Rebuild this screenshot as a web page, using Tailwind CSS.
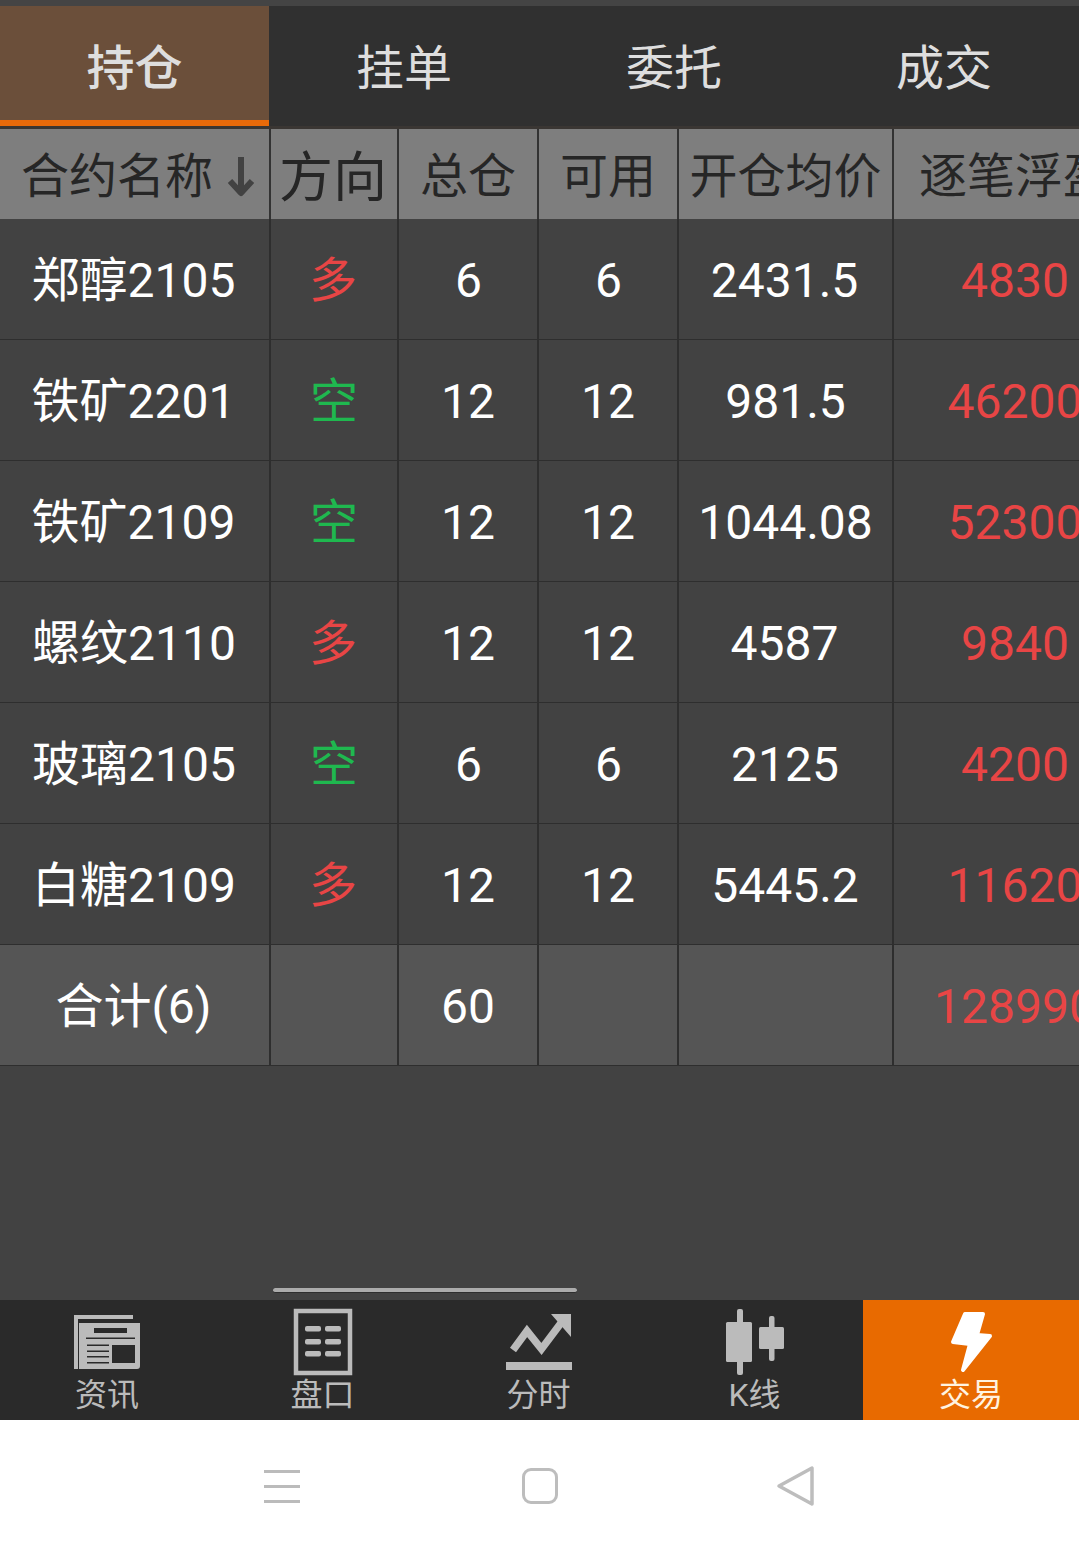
<!DOCTYPE html>
<html lang="zh-CN">
<head>
<meta charset="utf-8">
<script src="https://cdn.jsdelivr.net/npm/@tailwindcss/browser@4"></script>
</head>
<body class="m-0 bg-white">
<div class="relative w-[1079px] h-[1552px] overflow-hidden flex flex-col font-['Roboto','Noto_Sans_CJK_SC',sans-serif] text-[48px] leading-none">
  <div class="h-[6px] shrink-0 bg-[#444444]"></div>
  <div class="h-[120px] shrink-0 grid grid-cols-[269px_270px_270px_270px] bg-[#303030] text-[#dedede] text-center">
    <div class="bg-[#6b4f3a] border-b-[6px] border-[#e86a0a] flex items-center justify-center pt-[11px] font-medium">持仓</div>
    <div class="flex items-center justify-center pt-[5px]">挂单</div>
    <div class="flex items-center justify-center pt-[5px]">委托</div>
    <div class="flex items-center justify-center pt-[5px]">成交</div>
  </div>
  <div class="h-[3px] shrink-0 bg-[#3a3633]"></div>

  <div class="flex-1 bg-[#424242] overflow-hidden">
    <div class="w-[1138px] h-[90px] grid grid-cols-[271px_128px_140px_140px_215px_244px] bg-[#7e7e7e] text-[#262626] text-center *:pt-[6px]">
      <div class="border-r-2 border-[#333333] flex items-center pl-[21px] gap-[14px]">合约名称<svg class="w-[28px] h-[40px]" viewBox="0 0 28 40" fill="none" stroke="#424242" stroke-width="6" stroke-linejoin="round"><path d="M14 0V35M3 24L14 36L25 24"/></svg></div>
      <div class="border-r-2 border-[#333333] flex items-center justify-center text-[54px] pr-[2px] pt-[9px]!">方向</div>
      <div class="border-r-2 border-[#333333] flex items-center justify-center">总仓</div>
      <div class="border-r-2 border-[#333333] flex items-center justify-center">可用</div>
      <div class="border-r-2 border-[#333333] flex items-center justify-center">开仓均价</div>
      <div class="flex items-center justify-center pr-[2px]">逐笔浮盈</div>
    </div>

    <div class="w-[1138px] h-[121px] grid grid-cols-[271px_128px_140px_140px_215px_244px] border-b border-[#2e2e2e] text-white text-center *:pt-[3px]">
      <div class="border-r-2 border-[#2e2e2e] flex items-center justify-center pr-[2px]">郑醇2105</div>
      <div class="border-r-2 border-[#2e2e2e] flex items-center justify-center pr-[2px] text-[#e84545]">多</div>
      <div class="border-r-2 border-[#2e2e2e] flex items-center justify-center pl-[1px]">6</div>
      <div class="border-r-2 border-[#2e2e2e] flex items-center justify-center pl-[1px]">6</div>
      <div class="border-r-2 border-[#2e2e2e] flex items-center justify-center pr-[2px]">2431.5</div>
      <div class="flex items-center justify-center pr-[2px] text-[#e84545]">4830</div>
    </div>
    <div class="w-[1138px] h-[121px] grid grid-cols-[271px_128px_140px_140px_215px_244px] border-b border-[#2e2e2e] text-white text-center *:pt-[3px]">
      <div class="border-r-2 border-[#2e2e2e] flex items-center justify-center pr-[2px]">铁矿2201</div>
      <div class="border-r-2 border-[#2e2e2e] flex items-center justify-center text-[#1fb84f]">空</div>
      <div class="border-r-2 border-[#2e2e2e] flex items-center justify-center">12</div>
      <div class="border-r-2 border-[#2e2e2e] flex items-center justify-center">12</div>
      <div class="border-r-2 border-[#2e2e2e] flex items-center justify-center">981.5</div>
      <div class="flex items-center justify-center pr-[2px] text-[#e84545]">46200</div>
    </div>
    <div class="w-[1138px] h-[121px] grid grid-cols-[271px_128px_140px_140px_215px_244px] border-b border-[#2e2e2e] text-white text-center *:pt-[3px]">
      <div class="border-r-2 border-[#2e2e2e] flex items-center justify-center pr-[2px]">铁矿2109</div>
      <div class="border-r-2 border-[#2e2e2e] flex items-center justify-center text-[#1fb84f]">空</div>
      <div class="border-r-2 border-[#2e2e2e] flex items-center justify-center">12</div>
      <div class="border-r-2 border-[#2e2e2e] flex items-center justify-center">12</div>
      <div class="border-r-2 border-[#2e2e2e] flex items-center justify-center">1044.08</div>
      <div class="flex items-center justify-center pr-[2px] text-[#e84545]">52300</div>
    </div>
    <div class="w-[1138px] h-[121px] grid grid-cols-[271px_128px_140px_140px_215px_244px] border-b border-[#2e2e2e] text-white text-center *:pt-[3px]">
      <div class="border-r-2 border-[#2e2e2e] flex items-center justify-center pr-[1px]">螺纹2110</div>
      <div class="border-r-2 border-[#2e2e2e] flex items-center justify-center pr-[2px] text-[#e84545]">多</div>
      <div class="border-r-2 border-[#2e2e2e] flex items-center justify-center">12</div>
      <div class="border-r-2 border-[#2e2e2e] flex items-center justify-center">12</div>
      <div class="border-r-2 border-[#2e2e2e] flex items-center justify-center pr-[2px]">4587</div>
      <div class="flex items-center justify-center pr-[2px] text-[#e84545]">9840</div>
    </div>
    <div class="w-[1138px] h-[121px] grid grid-cols-[271px_128px_140px_140px_215px_244px] border-b border-[#2e2e2e] text-white text-center *:pt-[3px]">
      <div class="border-r-2 border-[#2e2e2e] flex items-center justify-center pr-[1px]">玻璃2105</div>
      <div class="border-r-2 border-[#2e2e2e] flex items-center justify-center text-[#1fb84f]">空</div>
      <div class="border-r-2 border-[#2e2e2e] flex items-center justify-center pl-[1px]">6</div>
      <div class="border-r-2 border-[#2e2e2e] flex items-center justify-center pl-[1px]">6</div>
      <div class="border-r-2 border-[#2e2e2e] flex items-center justify-center pr-[1px]">2125</div>
      <div class="flex items-center justify-center pr-[2px] text-[#e84545]">4200</div>
    </div>
    <div class="w-[1138px] h-[121px] grid grid-cols-[271px_128px_140px_140px_215px_244px] border-b border-[#2e2e2e] text-white text-center *:pt-[3px]">
      <div class="border-r-2 border-[#2e2e2e] flex items-center justify-center pr-[1px]">白糖2109</div>
      <div class="border-r-2 border-[#2e2e2e] flex items-center justify-center pr-[2px] text-[#e84545]">多</div>
      <div class="border-r-2 border-[#2e2e2e] flex items-center justify-center">12</div>
      <div class="border-r-2 border-[#2e2e2e] flex items-center justify-center">12</div>
      <div class="border-r-2 border-[#2e2e2e] flex items-center justify-center pr-[1px]">5445.2</div>
      <div class="flex items-center justify-center pr-[2px] text-[#e84545]">11620</div>
    </div>
    <div class="w-[1138px] h-[121px] grid grid-cols-[271px_128px_140px_140px_215px_244px] border-b border-[#2e2e2e] bg-[#555555] text-white text-center *:pt-[3px]">
      <div class="border-r-2 border-[#2e2e2e] flex items-center justify-center pr-[2px]">合计(6)</div>
      <div class="border-r-2 border-[#2e2e2e]"></div>
      <div class="border-r-2 border-[#2e2e2e] flex items-center justify-center">60</div>
      <div class="border-r-2 border-[#2e2e2e]"></div>
      <div class="border-r-2 border-[#2e2e2e]"></div>
      <div class="flex items-center justify-center pr-[2px] text-[#e84545]">128990</div>
    </div>
  </div>

  <div class="absolute left-[273px] top-[1288px] w-[304px] h-[5px] rounded-full bg-[#ababab] border-b border-[#2e2e2e]"></div>

  <div class="h-[120px] shrink-0 grid grid-cols-[214px_217px_215px_217px_216px] bg-[#2a2a2a] text-[#bbbbbb] text-[32px] text-center *:pt-[4px]">
    <div class="flex flex-col items-center">
      <svg class="w-[80px] h-[74px]" viewBox="67 1304 80 74"><path fill="#bbbbbb" d="M74 1315H133V1319H78V1369H74ZM79 1323H140V1366Q140 1369 137 1369H79Z"/><path fill="#2a2a2a" d="M94 1328H127V1333H94ZM86 1337.500H135V1339H86ZM112 1345H135V1363H112ZM87 1344.500H109V1346H87ZM87 1350.500H109V1352H87ZM87 1356H109V1357.500H87ZM87 1362H109V1363.500H87Z"/></svg>
      <div class="leading-[36px] -mt-[1px]">资讯</div>
    </div>
    <div class="flex flex-col items-center">
      <svg class="w-[80px] h-[74px]" viewBox="283 1304 80 74"><rect x="296" y="1311" width="54" height="62" fill="none" stroke="#bbbbbb" stroke-width="4.500"/><g fill="#bbbbbb"><rect x="305" y="1326" width="16" height="5.500" rx="2"/><rect x="325" y="1326" width="16" height="5.500" rx="2"/><rect x="305" y="1339" width="16" height="5.500" rx="2"/><rect x="325" y="1339" width="16" height="5.500" rx="2"/><rect x="305" y="1351" width="16" height="5.500" rx="2"/><rect x="325" y="1351" width="16" height="5.500" rx="2"/></g></svg>
      <div class="leading-[36px] -mt-[1px]">盘口</div>
    </div>
    <div class="flex flex-col items-center">
      <svg class="w-[80px] h-[74px]" viewBox="499 1304 80 74"><path fill="none" stroke="#bbbbbb" stroke-width="7.500" d="M513 1350L527 1331L541.500 1349L561 1323"/><path fill="#bbbbbb" d="M551 1314H571V1337ZM506 1362H572V1370H506Z"/></svg>
      <div class="leading-[36px] -mt-[1px]">分时</div>
    </div>
    <div class="flex flex-col items-center">
      <svg class="w-[80px] h-[74px]" viewBox="715 1304 80 74"><g fill="#bbbbbb"><rect x="737" y="1309" width="6" height="66" rx="2"/><rect x="726" y="1322" width="26" height="40" rx="1.500"/><rect x="769" y="1316" width="5.500" height="45" rx="2"/><rect x="759" y="1327" width="25" height="22" rx="1.500"/></g></svg>
      <div class="leading-[36px] -mt-[1px]">K线</div>
    </div>
    <div class="flex flex-col items-center bg-[#e86a00] text-[#fff3e0]">
      <svg class="w-[80px] h-[74px]" viewBox="932 1304 80 74"><path fill="#ffffff" stroke="#ffffff" stroke-width="4" stroke-linejoin="round" d="M966 1314H984L978 1335L991 1336L964 1370L971 1344L954 1342Z"/></svg>
      <div class="leading-[36px] -mt-[1px]">交易</div>
    </div>
  </div>

  <div class="h-[132px] shrink-0 bg-white flex items-center pl-[264px]">
    <div class="w-[36px] h-[33px] flex flex-col justify-between"><div class="h-[3px] bg-[#bbbbbb]"></div><div class="h-[3px] bg-[#bbbbbb]"></div><div class="h-[3px] bg-[#bbbbbb]"></div></div>
    <div class="ml-[222px] w-[36px] h-[36px] rounded-[9px] border-[3px] border-[#bdbdbd]"></div>
    <svg class="ml-[218px] w-[40px] h-[42px]" viewBox="0 0 40 42"><path d="M3 21L36 3V39Z" fill="none" stroke="#bdbdbd" stroke-width="3.500" stroke-linejoin="round"/></svg>
  </div>
</div>
</body>
</html>
